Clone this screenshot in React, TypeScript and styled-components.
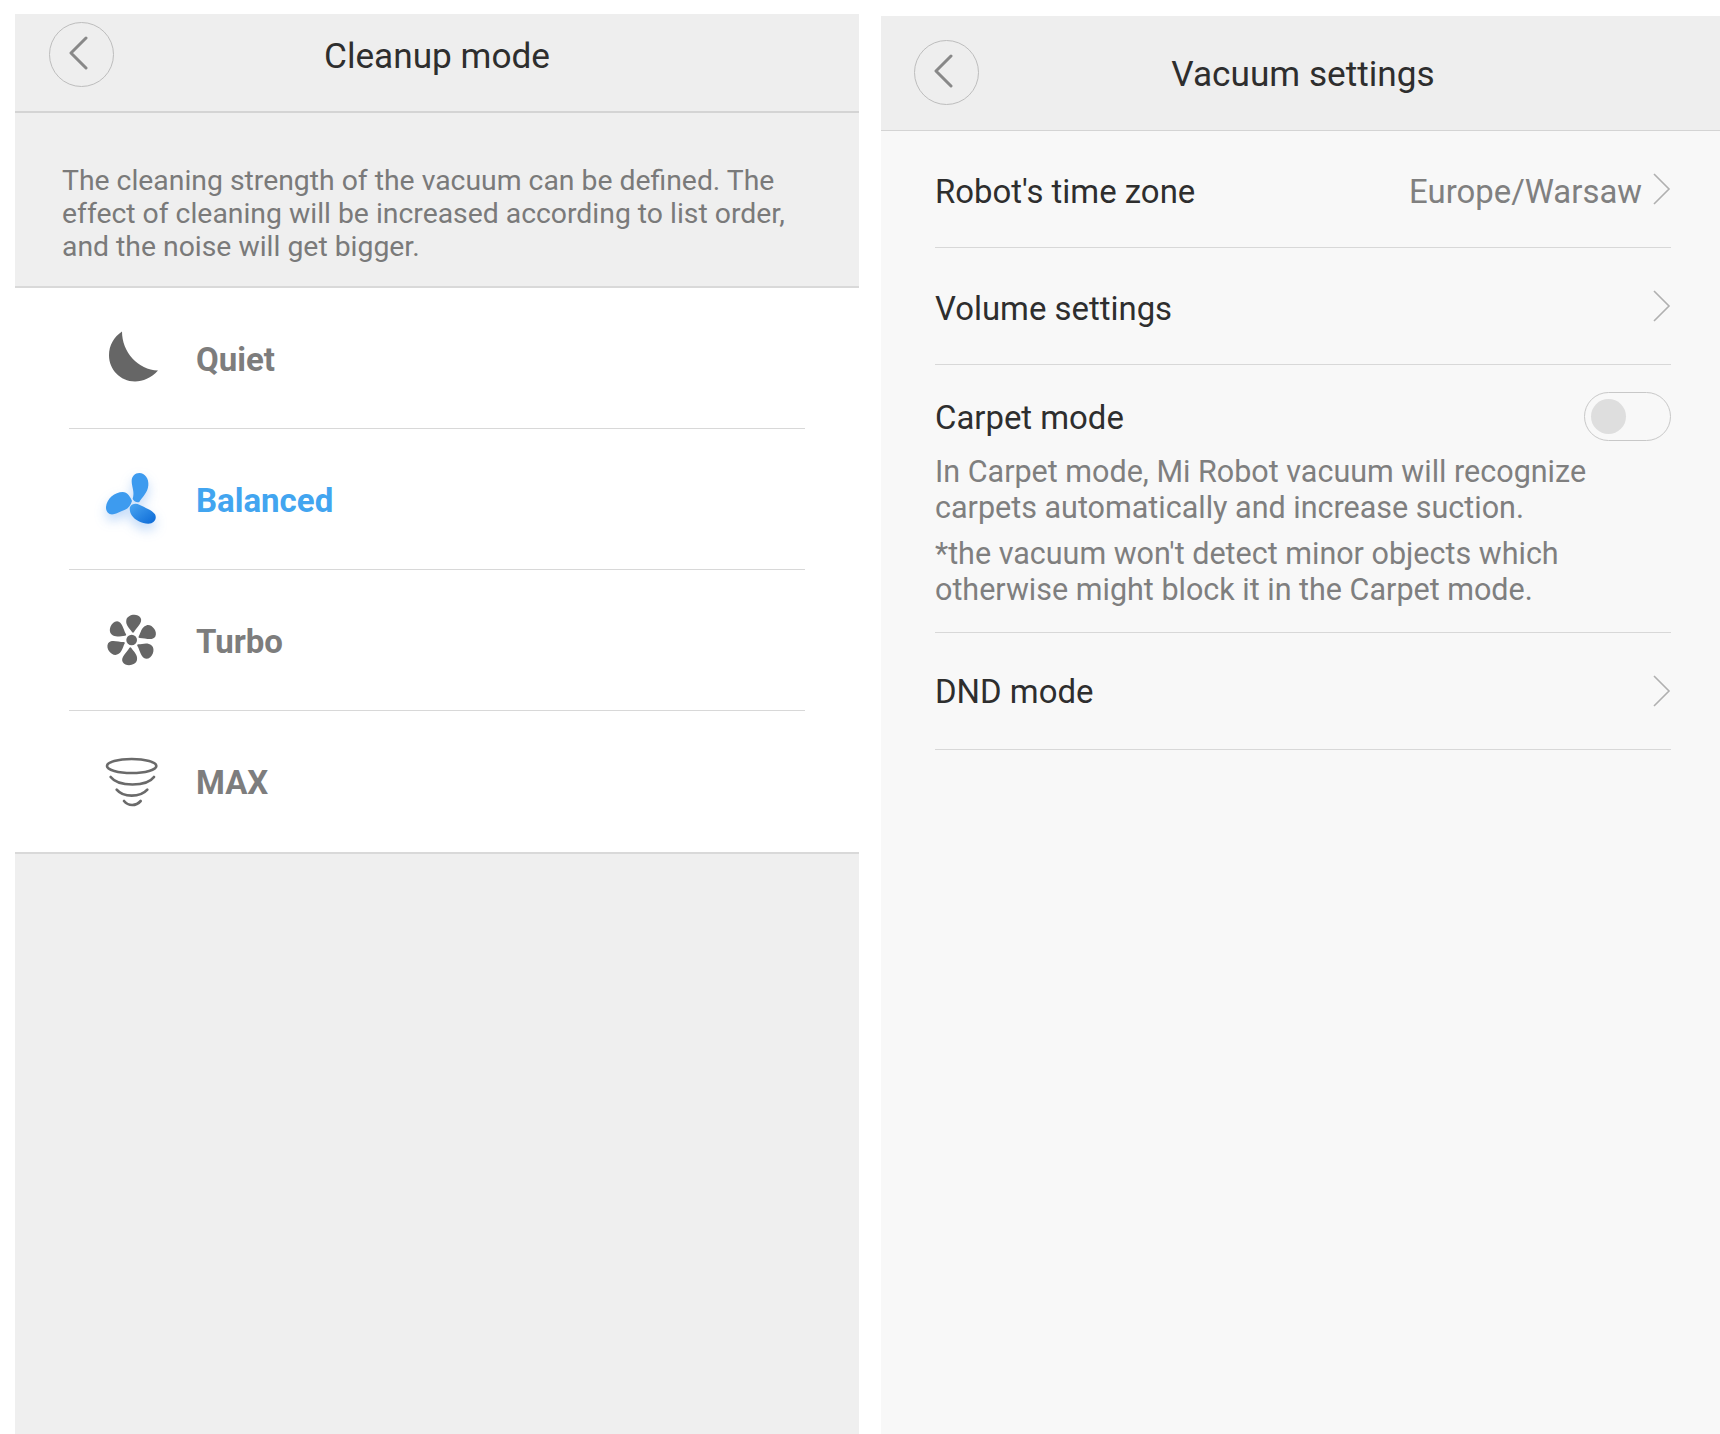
import React from "react";
import styled, { createGlobalStyle } from "styled-components";

const Global = createGlobalStyle`
  html, body { margin: 0; padding: 0; background: #fff; }
  #root { width: 1720px; height: 1434px; overflow: hidden; }
  * { box-sizing: border-box; }
`;

const Page = styled.div`
  display: flex;
  align-items: flex-start;
  width: 1720px;
  height: 1434px;
  padding-left: 15px;
  gap: 22px;
  font-family: Roboto, "Liberation Sans", sans-serif;
`;

const Panel = styled.section<{ $top: number; $width: number; $bg: string }>`
  display: flex;
  flex-direction: column;
  margin-top: ${(p) => p.$top}px;
  width: ${(p) => p.$width}px;
  height: ${(p) => 1434 - p.$top}px;
  background: ${(p) => p.$bg};
`;

const Header = styled.header<{ $height: number; $pad: number; $padRight: number; $border: number; $lift: number }>`
  display: grid;
  grid-template-columns: 1fr auto 1fr;
  align-items: center;
  height: ${(p) => p.$height}px;
  padding: 0 ${(p) => p.$padRight}px ${(p) => p.$lift}px ${(p) => p.$pad}px;
  background: #eeeeee;
  border-bottom: ${(p) => p.$border}px solid #d4d4d4;
  flex-shrink: 0;
`;

const BackButton = styled.button`
  display: flex;
  align-items: center;
  justify-content: center;
  width: 65px;
  height: 65px;
  padding: 0;
  border: 1.5px solid #bdbdbd;
  border-radius: 50%;
  background: transparent;
`;

const Title = styled.h1`
  margin: 4px 0 0;
  font-size: 35.2px;
  line-height: 44px;
  font-weight: 400;
  color: #2e2e2e;
  white-space: nowrap;
`;

const Intro = styled.p`
  margin: 0;
  height: 175px;
  padding: 52px 50px 0 47px;
  font-size: 28.35px;
  line-height: 32.9px;
  color: #7a7a7a;
  border-bottom: 2px solid #d9d9d9;
`;

const ModeList = styled.ul`
  margin: 0;
  padding: 0 54px;
  list-style: none;
  background: #fff;
  border-bottom: 2px solid #d9d9d9;
`;

const ModeRow = styled.li<{ $active?: boolean }>`
  display: flex;
  align-items: center;
  gap: 35px;
  height: 141.1px;
  padding-left: 32px;
  font-size: 33px;
  font-weight: 700;
  color: ${(p) => (p.$active ? "#42a5f0" : "#7d7d7d")};
  border-bottom: 1.5px solid #d8d8d8;
  &:last-child { border-bottom: 0; }
`;

const ModeIcon = styled.svg<{ $glow?: boolean }>`
  width: 60px;
  height: 60px;
  flex-shrink: 0;
  overflow: visible;
  ${(p) => p.$glow && "filter: drop-shadow(0 6px 6px rgba(30, 120, 230, 0.28));"}
`;

const ModeLabel = styled.span`
  padding-top: 2px;
`;

const SettingsList = styled.div`
  padding: 0 49px 0 54px;
`;

const SettingRow = styled.div`
  display: flex;
  align-items: center;
  justify-content: space-between;
  height: 117px;
  font-size: 32.9px;
  color: #2e2e2e;
  border-bottom: 1.5px solid #d8d8d8;
`;

const SettingLabel = styled.span<{ $drop?: number }>`
  padding-top: ${(p) => p.$drop ?? 4}px;
`;

const SettingValue = styled.span`
  display: flex;
  align-items: center;
  gap: 11px;
  color: #808080;
`;

const CarpetRow = styled.div`
  height: 267.5px;
  padding-top: 27px;
  border-bottom: 1.5px solid #d8d8d8;
`;

const CarpetHead = styled.div`
  display: flex;
  align-items: center;
  justify-content: space-between;
  height: 49px;
  font-size: 32.9px;
  color: #2e2e2e;
`;

const CarpetText = styled.p<{ $gap: number }>`
  margin: ${(p) => p.$gap}px 0 0;
  font-size: 30.5px;
  line-height: 36px;
  color: #7f7f7f;
`;

const Toggle = styled.div`
  display: flex;
  align-items: center;
  width: 87px;
  height: 49px;
  padding-left: 6px;
  border: 1.5px solid #c8c8c8;
  border-radius: 25px;
`;

const Knob = styled.div`
  width: 35px;
  height: 35px;
  border-radius: 50%;
  background: #dedede;
`;

const Back = () => (
  <BackButton aria-label="Back">
    <svg width="22" height="34" viewBox="0 0 22 34" fill="none" stroke="#888" strokeWidth="3" strokeLinecap="round" strokeLinejoin="round" style={{ marginLeft: -6, marginTop: -2 }}>
      <path d="M18 2 3 17l15 15" />
    </svg>
  </BackButton>
);

const Chevron = () => (
  <svg width="18" height="32" viewBox="0 0 18 32" fill="none" stroke="#b0b0b0" strokeWidth="1.6">
    <path d="M1 1l15 15L1 31" />
  </svg>
);

const Moon = () => (
  <ModeIcon viewBox="0 0 60 60">
    <path fill="#666" d="M21 3.5C21 24 37 42 57 42.500 50 50 42 53.500 34 53.500 19 53.500 8 41 8 27.500 8 17 13 9 21 3.500Z" />
  </ModeIcon>
);

const Propeller = () => (
  <ModeIcon viewBox="63 476 180 180" $glow>
    <defs>
      <linearGradient id="blade" x1="0" y1="0" x2="1" y2="1">
        <stop offset="0" stopColor="#4aa6f2" />
        <stop offset="1" stopColor="#0b69d6" />
      </linearGradient>
    </defs>
    <g fill="#3d9bef">
      <path d="M178 488C195 488 207 505 205 525 203 548 187 560 178 575 170 578 160 572 158 565 165 545 155 530 155 512 155 498 165 488 178 488Z" />
      <path d="M78 590C80 565 105 545 128 545 142 545 152 560 156 572 152 585 145 595 135 598 122 602 112 610 100 612 88 614 77 605 78 590Z" />
    </g>
    <path fill="url(#blade)" d="M150 590C155 580 168 578 178 583 195 592 215 598 225 612 232 625 222 640 205 640 185 640 165 630 155 615 150 607 148 598 150 590Z" />
  </ModeIcon>
);

const Fan = () => (
  <ModeIcon viewBox="63 60 180 180">
    <g fill="#666">
      <circle cx="155" cy="150" r="16" />
      {[0, 60, 120, 180, 240, 300].map((a) => (
        <path key={a} transform={`rotate(${a} 155 150)`} d="M156 126C150 116 136 106 139 90 142 74 172 68 182 84 189 98 170 112 162 126 160 129 158 129 156 126Z" />
      ))}
    </g>
  </ModeIcon>
);

const Tornado = () => (
  <ModeIcon viewBox="63 483 180 180">
    <g fill="none" stroke="#6a6a6a" strokeWidth="8" strokeLinecap="round">
      <ellipse cx="155" cy="525" rx="74" ry="21" />
      <path d="M92 558C115 588 200 588 222 558" />
      <path d="M110 596C130 620 180 620 202 596" />
      <path d="M132 630C145 646 168 646 182 630" />
    </g>
  </ModeIcon>
);

export default function App() {
  return (
    <>
      <Global />
      <Page>
        <Panel $top={14} $width={844} $bg="#efefef">
          <Header $height={99} $pad={34} $padRight={34} $border={2} $lift={17}>
            <Back />
            <Title>Cleanup mode</Title>
          </Header>
          <Intro>
            The cleaning strength of the vacuum can be defined. The effect of cleaning will be increased according to list order, and the noise will get bigger.
          </Intro>
          <ModeList>
            <ModeRow><Moon /><ModeLabel>Quiet</ModeLabel></ModeRow>
            <ModeRow $active><Propeller /><ModeLabel>Balanced</ModeLabel></ModeRow>
            <ModeRow><Fan /><ModeLabel>Turbo</ModeLabel></ModeRow>
            <ModeRow><Tornado /><ModeLabel>MAX</ModeLabel></ModeRow>
          </ModeList>
        </Panel>
        <Panel $top={16} $width={839} $bg="#f8f8f8">
          <Header $height={115} $pad={33} $padRight={28} $border={1.5} $lift={2}>
            <Back />
            <Title>Vacuum settings</Title>
          </Header>
          <SettingsList>
            <SettingRow>
              <SettingLabel>Robot's time zone</SettingLabel>
              <SettingValue><SettingLabel>Europe/Warsaw</SettingLabel> <Chevron /></SettingValue>
            </SettingRow>
            <SettingRow>
              <SettingLabel>Volume settings</SettingLabel>
              <SettingValue><Chevron /></SettingValue>
            </SettingRow>
            <CarpetRow>
              <CarpetHead>
                <SettingLabel $drop={2}>Carpet mode</SettingLabel>
                <Toggle><Knob /></Toggle>
              </CarpetHead>
              <CarpetText $gap={13}>In Carpet mode, Mi Robot vacuum will recognize carpets automatically and increase suction.</CarpetText>
              <CarpetText $gap={10}>*the vacuum won't detect minor objects which otherwise might block it in the Carpet mode.</CarpetText>
            </CarpetRow>
            <SettingRow>
              <SettingLabel $drop={2}>DND mode</SettingLabel>
              <SettingValue><Chevron /></SettingValue>
            </SettingRow>
          </SettingsList>
        </Panel>
      </Page>
    </>
  );
}
